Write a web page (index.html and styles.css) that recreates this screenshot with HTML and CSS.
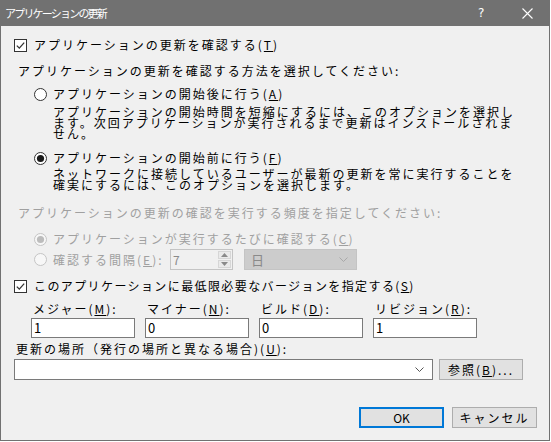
FILE: index.html
```html
<!DOCTYPE html>
<html lang="ja">
<head>
<meta charset="utf-8">
<link rel="stylesheet" href="styles.css">
</head>
<body>
<div class="window">
  <div class="titlebar">
    <span class="title">アプリケーションの更新</span>
    <span class="help">?</span>
    <span class="close"><svg width="11" height="11" viewBox="0 0 11 11"><path d="M0.5 0.5 L10.5 10.5 M10.5 0.5 L0.5 10.5" stroke="#fff" stroke-width="1.1" fill="none"/></svg></span>
  </div>
  <div class="content">
    <div class="row check-row r-check1">
      <svg class="box" width="13" height="13" viewBox="0 0 13 13"><rect x="0.5" y="0.5" width="12" height="12" fill="#fff" stroke="#333"/><path d="M2.8 6.6 L5.3 9.1 L10.2 3.6" stroke="#333" stroke-width="1.3" fill="none"/></svg>
      <span class="txt">アプリケーションの更新を確認する(<u>T</u>)</span>
    </div>
    <div class="row label-row r-label">アプリケーションの更新を確認する方法を選択してください:</div>
    <div class="row radio-row r-radio1">
      <svg class="radio" width="13" height="13" viewBox="0 0 13 13"><circle cx="6.5" cy="6.5" r="6" fill="#fff" stroke="#333"/></svg>
      <span class="txt">アプリケーションの開始後に行う(<u>A</u>)</span>
    </div>
    <div class="desc r-desc1">アプリケーションの開始時間を短縮にするには、このオプションを選択します。次回アプリケーションが実行されるまで更新はインストールされません。</div>
    <div class="row radio-row r-radio2">
      <svg class="radio" width="13" height="13" viewBox="0 0 13 13"><circle cx="6.5" cy="6.5" r="6" fill="#fff" stroke="#333"/><circle cx="6.5" cy="6.5" r="3.6" fill="#1a1a1a"/></svg>
      <span class="txt">アプリケーションの開始前に行う(<u>F</u>)</span>
    </div>
    <div class="desc r-desc2">ネットワークに接続しているユーザーが最新の更新を常に実行することを確実にするには、このオプションを選択します。</div>
    <div class="row label-row disabled r-dlabel">アプリケーションの更新の確認を実行する頻度を指定してください:</div>
    <div class="row radio-row disabled r-dradio1">
      <svg class="radio" width="13" height="13" viewBox="0 0 13 13"><circle cx="6.5" cy="6.5" r="6" fill="#f7f7f7" stroke="#c4c4c4"/><circle cx="6.5" cy="6.5" r="3.6" fill="#bcbcbc"/></svg>
      <span class="txt">アプリケーションが実行するたびに確認する(<u>C</u>)</span>
    </div>
    <div class="row radio-row disabled r-dradio2">
      <svg class="radio" width="13" height="13" viewBox="0 0 13 13"><circle cx="6.5" cy="6.5" r="6" fill="#f7f7f7" stroke="#c4c4c4"/></svg>
      <span class="txt interval">確認する間隔(<u>E</u>):</span>
      <div class="spin">
        <span class="spin-val">7</span>
        <div class="spin-btns">
          <span class="spin-btn"><svg width="7" height="4" viewBox="0 0 7 4"><path d="M3.5 0 L7 4 L0 4 Z" fill="#8a8a8a"/></svg></span>
          <span class="spin-btn"><svg width="7" height="4" viewBox="0 0 7 4"><path d="M0 0 L7 0 L3.5 4 Z" fill="#8a8a8a"/></svg></span>
        </div>
      </div>
      <div class="dcombo">
        <span class="dcombo-val">日</span>
        <svg class="chev" width="9" height="5" viewBox="0 0 9 5"><path d="M0.5 0.5 L4.5 4.5 L8.5 0.5" stroke="#a8a8a8" fill="none"/></svg>
      </div>
    </div>
    <div class="row check-row r-check2">
      <svg class="box" width="13" height="13" viewBox="0 0 13 13"><rect x="0.5" y="0.5" width="12" height="12" fill="#fff" stroke="#333"/><path d="M2.8 6.6 L5.3 9.1 L10.2 3.6" stroke="#333" stroke-width="1.3" fill="none"/></svg>
      <span class="txt tight">このアプリケーションに最低限必要なバージョンを指定する(<u>S</u>)</span>
    </div>
    <div class="version-grid">
      <span class="vlabel">メジャー(<u>M</u>):</span>
      <span class="vlabel">マイナー(<u>N</u>):</span>
      <span class="vlabel">ビルド(<u>D</u>):</span>
      <span class="vlabel">リビジョン(<u>R</u>):</span>
      <div class="input">1</div>
      <div class="input">0</div>
      <div class="input">0</div>
      <div class="input">1</div>
    </div>
    <div class="row label-row r-loc">更新の場所（発行の場所と異なる場合)(<u>U</u>):</div>
    <div class="loc-row">
      <div class="combo">
        <svg class="chev" width="9" height="5" viewBox="0 0 9 5"><path d="M0.5 0.5 L4.5 4.5 L8.5 0.5" stroke="#555" fill="none"/></svg>
      </div>
      <div class="btn browse">参照(<u>B</u>)...</div>
    </div>
    <div class="actions">
      <div class="btn ok">OK</div>
      <div class="btn">キャンセル</div>
    </div>
  </div>
</div>
</body>
</html>
```
FILE: styles.css
```css
html, body {
  margin: 0;
  padding: 0;
  background: #ffffff;
}
body {
  font-family: "Noto Sans CJK JP", "Noto Sans", sans-serif;
  font-size: 12px;
  color: #000;
}
.window {
  width: 550px;
  height: 441px;
  box-sizing: border-box;
  border: 1px solid #717171;
  border-top: none;
  background: #f0f0f0;
  display: flex;
  flex-direction: column;
}
.titlebar {
  height: 26px;
  margin: 0 -1px;
  background: #717171;
  color: #fff;
  display: flex;
  align-items: center;
  position: relative;
}
.title {
  margin-left: 5px;
  font-size: 11px;
  letter-spacing: -1.8px;
  line-height: 26px;
}
.help {
  position: absolute;
  left: 478px;
  top: 0;
  line-height: 26px;
  font-family: "DejaVu Sans", sans-serif;
  font-size: 12px;
}
.close {
  position: absolute;
  left: 522px;
  top: 8px;
  height: 11px;
}
.close svg { display: block; }
.content {
  display: flex;
  flex-direction: column;
  flex: 1;
}
.row {
  display: flex;
  align-items: center;
  height: 14px;
  line-height: 14px;
  white-space: nowrap;
  letter-spacing: 2px;
}
.txt { letter-spacing: 2px; }
.txt.tight { letter-spacing: 1.4px; }
u { text-decoration: underline; text-underline-offset: 1px; }
.box, .radio { flex: none; display: block; }
.check-row { margin-left: 13px; }
.check-row .box { margin-right: 7px; }
.radio-row { margin-left: 33px; }
.radio-row .radio { margin-right: 6px; }
.label-row { margin-left: 17px; }
.disabled { color: #a0a0a0; }

.r-check1 { margin-top: 12px; }
.r-label { margin-top: 12px; }
.r-radio1 { margin-top: 9px; }
.desc {
  margin-left: 52px;
  width: 470px;
  line-height: 11px;
  letter-spacing: 2px;
  word-break: break-all;
}
.r-desc1 { margin-top: 5px; }
.r-radio2 { margin-top: 12px; }
.r-desc2 { margin-top: 3px; }
.r-dlabel { margin-top: 16px; }
.r-dradio1 { margin-top: 12px; }
.r-dradio2 { margin-top: 3px; height: 21px; }
.interval { width: 117px; flex: none; }
.spin {
  width: 63px;
  height: 21px;
  box-sizing: border-box;
  border: 1px solid #c4c4c4;
  background: #f0f0f0;
  display: flex;
  letter-spacing: 0;
}
.spin-val {
  flex: 1;
  padding-left: 2px;
  line-height: 19px;
  color: #8a8a8a;
}
.spin-btns {
  width: 13px;
  margin: 1px;
  display: flex;
  flex-direction: column;
  gap: 1px;
}
.spin-btn {
  flex: 1;
  border: 1px solid #d6d6d6;
  background: #eaeaea;
  display: flex;
  align-items: center;
  justify-content: center;
}
.spin-btn svg { display: block; }
.dcombo {
  margin-left: 11px;
  width: 113px;
  height: 21px;
  box-sizing: border-box;
  border: 1px solid #c4c4c4;
  background: #cccccc;
  display: flex;
  align-items: center;
  justify-content: space-between;
  padding: 0 8px 0 6px;
  letter-spacing: 0;
}
.dcombo-val { color: #8a8a8a; font-size: 13px; }
.chev { display: block; }

.r-check2 { margin-top: 9px; }
.version-grid {
  margin-top: 9px;
  margin-left: 30px;
  display: grid;
  grid-template-columns: repeat(4, 104px);
  grid-template-rows: 14px 20px;
  column-gap: 10px;
  row-gap: 2px;
}
.vlabel {
  padding-left: 2px;
  line-height: 14px;
  letter-spacing: 2px;
  white-space: nowrap;
}
.input {
  box-sizing: border-box;
  height: 20px;
  border: 1px solid #7a7a7a;
  background: #fff;
  padding-left: 2px;
  line-height: 18px;
  font-size: 13px;
}
.r-loc { margin-top: 4px; margin-left: 15px; }
.loc-row {
  margin-top: 3px;
  margin-left: 13px;
  display: flex;
  gap: 6px;
  height: 21px;
}
.combo {
  width: 419px;
  box-sizing: border-box;
  border: 1px solid #7a7a7a;
  background: #fff;
  display: flex;
  align-items: center;
  justify-content: flex-end;
  padding-right: 8px;
}
.btn {
  box-sizing: border-box;
  height: 21px;
  width: 85px;
  border: 1px solid #adadad;
  background: #e1e1e1;
  text-align: center;
  line-height: 19px;
  letter-spacing: 2px;
  white-space: nowrap;
}
.browse { width: 84px; }
.actions {
  margin-top: 27px;
  margin-right: 12px;
  display: flex;
  justify-content: flex-end;
  gap: 8px;
}
.ok {
  border: 2px solid #0078d7;
  line-height: 17px;
  letter-spacing: 0;
}
```
